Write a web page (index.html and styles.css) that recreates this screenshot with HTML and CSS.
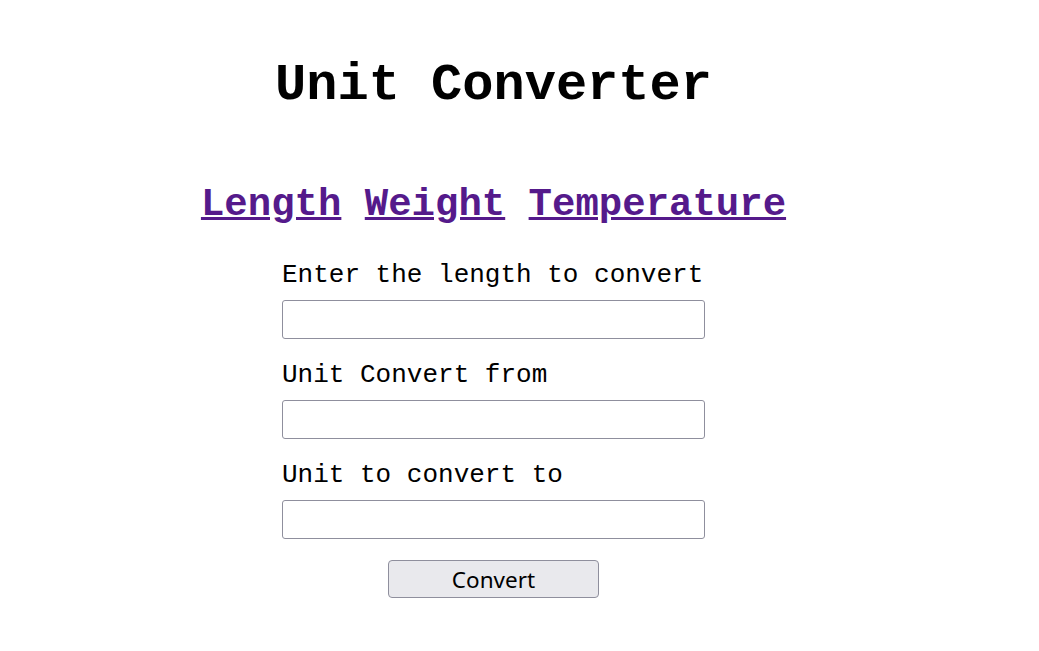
FILE: index.html
```html
<!DOCTYPE html>
<html lang="en">
<head>
<meta charset="utf-8">
<title>Unit Converter</title>
<link rel="stylesheet" href="styles.css">
</head>
<body>
<div class="page">
  <h1 class="title">Unit Converter</h1>
  <nav class="tabs">
    <a href="#length" class="tab">Length</a>
    <a href="#weight" class="tab">Weight</a>
    <a href="#temperature" class="tab">Temperature</a>
  </nav>
  <form class="form">
    <label class="label" for="value">Enter the length to convert</label>
    <input class="field" id="value" type="text">
    <label class="label" for="from">Unit Convert from</label>
    <input class="field" id="from" type="text">
    <label class="label" for="to">Unit to convert to</label>
    <input class="field" id="to" type="text">
    <button class="btn" type="button">Convert</button>
  </form>
</div>
</body>
</html>
```
FILE: styles.css
```css
html, body {
  margin: 0;
  padding: 0;
  background: #ffffff;
}
.page {
  width: 987px;
  display: flex;
  flex-direction: column;
  align-items: center;
  font-family: "Liberation Mono", monospace;
  color: #000000;
}
.title {
  margin: 56px 0 0;
  font-size: 52px;
  line-height: 60px;
  font-weight: bold;
}
.tabs {
  margin-top: 66px;
  text-align: center;
  white-space: nowrap;
  font-size: 39px;
  line-height: 46px;
  font-weight: bold;
}
.tab {
  color: #551a8b;
  text-decoration: underline;
}
.form {
  margin-top: 32px;
  width: 423px;
  display: flex;
  flex-direction: column;
}
.label {
  font-size: 26px;
  line-height: 30px;
  margin-bottom: 10px;
  white-space: nowrap;
}
.field {
  box-sizing: border-box;
  width: 423px;
  height: 39px;
  border: 1px solid #8f8f9d;
  border-radius: 3px;
  background: #ffffff;
  margin: 0 0 21px;
  padding: 0 6px;
  font-size: 20px;
}
.btn {
  align-self: center;
  box-sizing: border-box;
  width: 211px;
  height: 38px;
  margin-top: 0;
  border: 1px solid #8f8f9d;
  border-radius: 4px;
  background: #e9e9ed;
  color: #000000;
  font-family: "Noto Sans", "Open Sans", sans-serif;
  font-size: 22.5px;
  padding: 0;
}
```
